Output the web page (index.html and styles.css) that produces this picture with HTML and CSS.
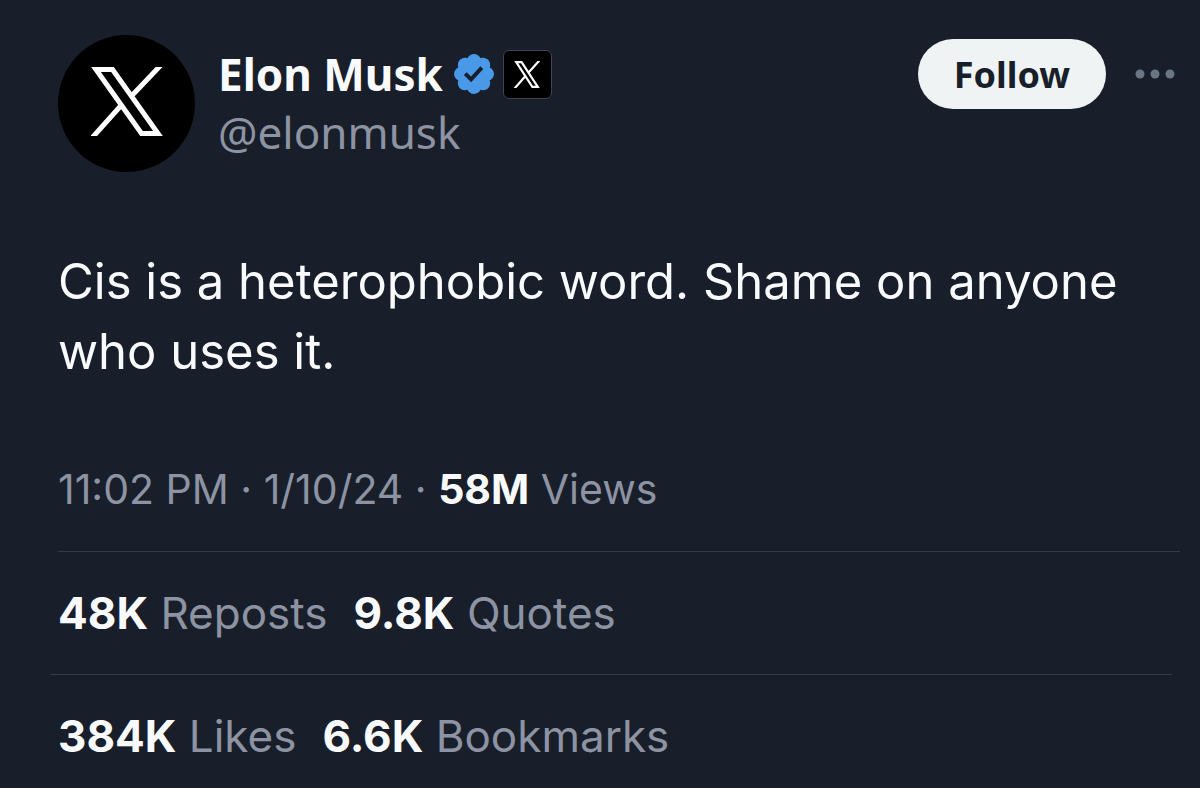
FILE: index.html
```html
<!DOCTYPE html>
<html lang="en">
<head>
    <meta charset="UTF-8">
    <meta name="viewport" content="width=device-width, initial-scale=1.0">
    <title>Elon Musk on X</title>
    <link rel="stylesheet" href="styles.css">
</head>
<body>
    <article class="post">
        <header class="post-header">
            <div class="avatar">
                <svg class="avatar-logo" viewBox="0 0 72 69" aria-hidden="true">
                    <path class="logo-line" d="M5 2.5H21.5L67 66.5H50.5Z M70 -2L41 28.5 M0 72L30.5 38" />
                </svg>
            </div>
            <div class="author">
                <div class="name-row">
                    <span class="name">Elon Musk</span>
                    <svg class="verified" viewBox="1.6 1.6 18.8 18.8" role="img" aria-label="Verified account">
                        <path d="M20.396 11c-.018-.646-.215-1.275-.57-1.816-.354-.54-.852-.972-1.438-1.246.223-.607.27-1.264.14-1.897-.131-.634-.437-1.218-.882-1.687-.47-.445-1.053-.75-1.687-.882-.633-.13-1.29-.083-1.897.14-.273-.587-.704-1.086-1.245-1.44S11.647 1.62 11 1.604c-.646.017-1.273.213-1.813.568s-.969.854-1.24 1.44c-.608-.223-1.267-.272-1.902-.14-.635.13-1.22.436-1.69.882-.445.47-.749 1.055-.878 1.688-.13.633-.08 1.29.144 1.896-.587.274-1.087.705-1.443 1.245-.356.54-.555 1.17-.574 1.817.02.647.218 1.276.574 1.817.356.54.856.972 1.443 1.245-.224.606-.274 1.263-.144 1.896.13.634.433 1.218.877 1.688.47.443 1.054.747 1.687.878.633.132 1.29.084 1.897-.136.274.586.705 1.084 1.246 1.439.54.354 1.17.551 1.816.569.647-.016 1.276-.213 1.817-.567s.972-.854 1.245-1.44c.604.239 1.266.296 1.903.164.636-.132 1.22-.447 1.68-.907.46-.46.776-1.044.908-1.681s.075-1.299-.165-1.903c.586-.274 1.084-.705 1.439-1.246.354-.54.551-1.17.569-1.816zM9.662 14.85l-3.429-3.428 1.293-1.302 2.072 2.072 4.4-4.794 1.347 1.246z" />
                    </svg>
                    <span class="affiliate">
                        <svg class="affiliate-logo" viewBox="0 0 72 75" aria-hidden="true">
                            <path class="logo-line" d="M6 3H21L66 72H51Z M71 -2L41 31 M0 78L30.5 43" />
                        </svg>
                    </span>
                </div>
                <div class="handle">@elonmusk</div>
            </div>
            <div class="actions">
                <button class="follow" type="button">Follow</button>
                <button class="more" type="button" aria-label="More">
                    <svg viewBox="0 0 40 10" aria-hidden="true">
                        <circle cx="5" cy="5" r="4.5" />
                        <circle cx="20" cy="5" r="4.5" />
                        <circle cx="35" cy="5" r="4.5" />
                    </svg>
                </button>
            </div>
        </header>

        <p class="post-text">Cis is a heterophobic word. Shame on anyone who uses it.</p>

        <div class="meta">11:02 PM · 1/10/24 · <strong>58M</strong> Views</div>

        <div class="stats">
            <span><strong>48K</strong> Reposts</span>
            <span><strong>9.8K</strong> Quotes</span>
        </div>
        <hr class="divider">
        <div class="stats stats-last">
            <span><strong>384K</strong> Likes</span>
            <span><strong>6.6K</strong> Bookmarks</span>
        </div>
    </article>
</body>
</html>
```
FILE: styles.css
```css
* {
    box-sizing: border-box;
}
body {
    margin: 0;
    background-color: #181f2a;
    color: #f9fafc;
    font-family: Inter, "Liberation Sans", sans-serif;
}
.post {
    padding: 35px 20px 0 58px;
}
.post-header {
    display: flex;
    align-items: flex-start;
}
.avatar {
    display: flex;
    justify-content: center;
    width: 137px;
    height: 137px;
    padding-top: 32px;
    border-radius: 50%;
    background-color: #000;
}
.avatar-logo {
    width: 72px;
    height: 69px;
}
.logo-line {
    fill: none;
    stroke: #fff;
    stroke-width: 5;
}
.author {
    flex: 1;
    margin-left: 23px;
    font-family: "Noto Sans", sans-serif;
    font-size: 44px;
    line-height: 58px;
}
.name-row {
    display: flex;
    align-items: center;
    height: 70px;
    margin-top: 4px;
}
.name {
    font-weight: 700;
}
.verified {
    width: 40px;
    height: 40px;
    margin-left: 11px;
    fill: #4a99e9;
}
.affiliate {
    display: flex;
    align-items: center;
    justify-content: center;
    width: 49px;
    height: 49px;
    margin-left: 9px;
    border: 1px solid #3d4450;
    border-radius: 6px;
    background-color: #000;
}
.affiliate-logo {
    width: 26px;
    height: 27px;
}
.affiliate-logo .logo-line {
    stroke-width: 6;
}
.handle {
    margin-top: -6px;
    color: #8d93a3;
}
.actions {
    display: flex;
    align-items: center;
    margin-top: 4px;
}
.follow {
    width: 188px;
    height: 70px;
    padding: 0;
    border: none;
    border-radius: 35px;
    background-color: #eff3f4;
    color: #181f2a;
    font-family: "Noto Sans", sans-serif;
    font-size: 36px;
    font-weight: 700;
    cursor: pointer;
}
.more {
    display: flex;
    margin-left: 29px;
    margin-right: 5px;
    padding: 0;
    border: none;
    background: none;
    cursor: pointer;
}
.more svg {
    width: 40px;
    height: 10px;
    fill: #6a7684;
}
.post-text {
    margin: 75px 0 0;
    font-size: 49px;
    line-height: 70px;
}
.meta,
.stats {
    color: #8d93a3;
    line-height: 60px;
}
strong {
    color: #f9fafc;
    font-weight: 700;
}
.meta {
    padding: 72px 0 32px;
    border-bottom: 1px solid #343b47;
    font-size: 41px;
}
.stats {
    display: flex;
    gap: 26px;
    padding: 31px 0;
    font-size: 44px;
}
.stats-last {
    padding-bottom: 16px;
}
.divider {
    height: 1px;
    margin: 0 8px 0 -8px;
    border: none;
    background-color: #343b47;
}
```
